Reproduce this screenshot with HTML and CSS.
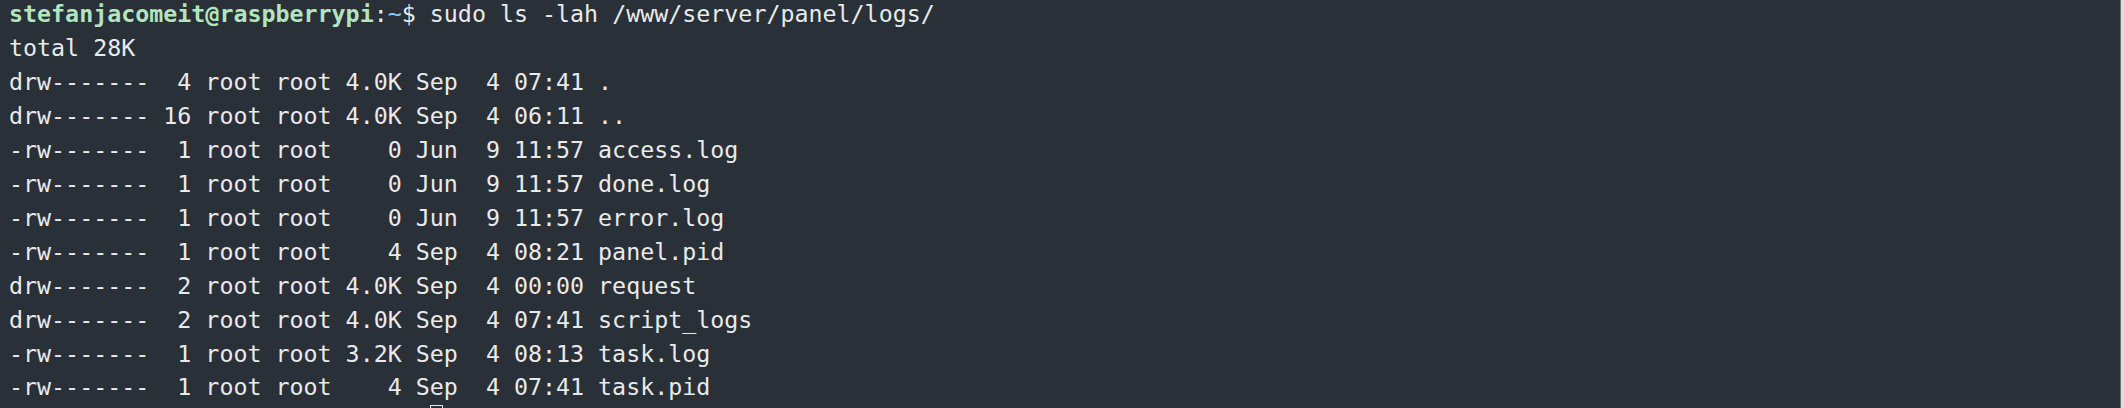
FILE: index.html
```html
<!DOCTYPE html>
<html>
<head>
<meta charset="utf-8">
<link rel="stylesheet" href="styles.css">
</head>
<body>
<div class="term"><pre class="out"><span class="user">stefanjacomeit@raspberrypi</span>:<span class="path">~</span>$ sudo ls -lah /www/server/panel/logs/
total 28K
drw-------  4 root root 4.0K Sep  4 07:41 .
drw------- 16 root root 4.0K Sep  4 06:11 ..
-rw-------  1 root root    0 Jun  9 11:57 access.log
-rw-------  1 root root    0 Jun  9 11:57 done.log
-rw-------  1 root root    0 Jun  9 11:57 error.log
-rw-------  1 root root    4 Sep  4 08:21 panel.pid
drw-------  2 root root 4.0K Sep  4 00:00 request
drw-------  2 root root 4.0K Sep  4 07:41 script_logs
-rw-------  1 root root 3.2K Sep  4 08:13 task.log
-rw-------  1 root root    4 Sep  4 07:41 task.pid
                              <span class="cursor"> </span></pre></div>
<div class="edge"></div>
</body>
</html>
```
FILE: styles.css
```css
html, body {
  margin: 0;
  height: 100%;
  overflow: hidden;
}
body {
  display: flex;
  background: #2a3038;
}
.term {
  flex: 1;
  background: #2a3038;
  padding: 0 0 0 9px;
  overflow: hidden;
}
.out {
  margin: 0;
  margin-top: -3px;
  font-family: "DejaVu Sans Mono", monospace;
  font-size: 23.3px;
  line-height: 33.95px;
  color: #e8eaec;
  white-space: pre;
}
.user {
  color: #b2e5bf;
  font-weight: bold;
}
.path {
  color: #8ec8f0;
}
.cursor {
  display: inline-block;
  width: 11px;
  height: 24px;
  border: 1.5px solid #e4e6e8;
  vertical-align: top;
  margin-top: 0.5px;
}
.edge {
  width: 3px;
  border-left: 1px solid #6e7276;
  background: #dedede;
}
```
